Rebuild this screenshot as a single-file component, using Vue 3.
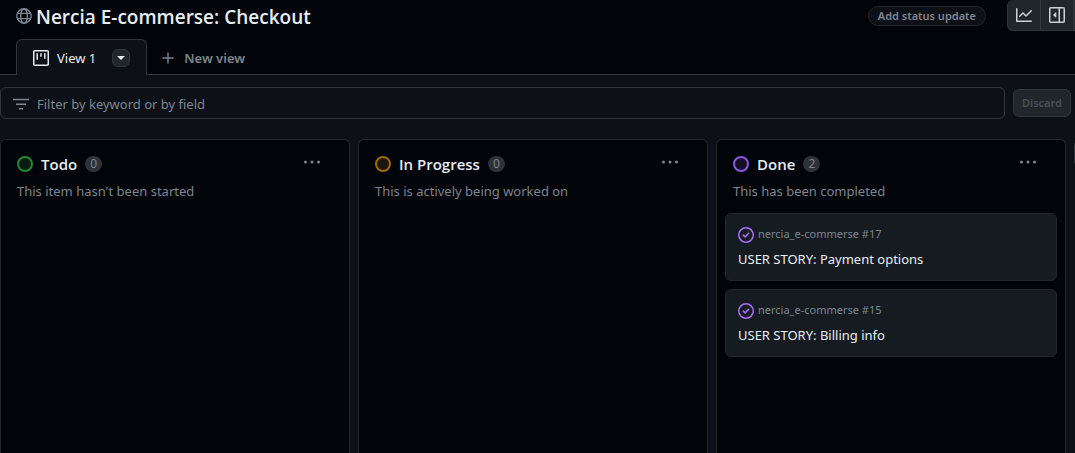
<script setup>
import { ref } from 'vue'

const filter = ref('')

const columns = [
  { name: 'Todo', tone: 'green', description: "This item hasn't been started", cards: [] },
  { name: 'In Progress', tone: 'amber', description: 'This is actively being worked on', cards: [] },
  {
    name: 'Done',
    tone: 'purple',
    description: 'This has been completed',
    cards: [
      { number: 17, title: 'USER STORY: Payment options' },
      { number: 15, title: 'USER STORY: Billing info' },
    ],
  },
]
</script>

<template>
  <div class="page">
    <header class="top">
      <div class="title-row">
        <svg class="icon muted" viewBox="0 0 16 16" aria-hidden="true">
          <g fill="none" stroke="currentColor" stroke-width="1.4">
            <circle cx="8" cy="8" r="7.2" />
            <ellipse cx="8" cy="8" rx="3.3" ry="7.2" />
            <path d="M1.4 5.4h13.2M1.4 10.6h13.2" />
          </g>
        </svg>
        <h1>Nercia E-commerse: Checkout</h1>
        <button class="status" type="button">Add status update</button>
        <div class="tools">
          <button type="button" aria-label="Insights">
            <svg class="icon" viewBox="0 0 16 16" aria-hidden="true">
              <path fill="currentColor" d="M1.5 1.75V13.5h13.75a.75.75 0 0 1 0 1.5H.75a.75.75 0 0 1-.75-.75V1.75a.75.75 0 0 1 1.5 0Zm14.28 2.53-5.25 5.25a.75.75 0 0 1-1.06 0L7 7.06 4.28 9.78a.751.751 0 0 1-1.06-1.06l3.25-3.25a.75.75 0 0 1 1.06 0L10 7.94l4.72-4.72a.751.751 0 0 1 1.06 1.06Z" />
            </svg>
          </button>
          <button type="button" aria-label="Project details">
            <svg class="icon" viewBox="0 0 16 16" aria-hidden="true">
              <g fill="none" stroke="currentColor" stroke-width="1.5">
                <rect x=".75" y=".75" width="14.5" height="14.5" rx="1" />
                <path d="M10.25 1v14" />
              </g>
              <path fill="currentColor" d="m4.2 8.2 2.4 2.4c.3.3.7.1.7-.3V5.7c0-.4-.4-.6-.7-.3L4.2 7.8a.28.28 0 0 0 0 .4Z" />
            </svg>
          </button>
          <button type="button" aria-label="More options"></button>
        </div>
      </div>
      <nav class="tabs">
        <div class="tab">
          <svg class="icon" viewBox="0 0 16 16" aria-hidden="true">
            <rect x=".75" y=".75" width="14.5" height="14.5" rx="1" fill="none" stroke="currentColor" stroke-width="1.5" />
            <path d="M4.2 3.2v6.6M8 3.2v3.6M11.8 3.2v5.6" stroke="currentColor" stroke-width="1.5" />
          </svg>
          <a href="#view-1">View 1</a>
          <button class="caret" type="button" aria-label="View options">
            <svg viewBox="0 0 8 4" aria-hidden="true"><path fill="currentColor" d="M0 0h8L4 4z" /></svg>
          </button>
        </div>
        <button class="new-view" type="button">
          <svg viewBox="0 0 12 12" aria-hidden="true">
            <path d="M6 .5v11M.5 6h11" stroke="currentColor" stroke-width="1.4" />
          </svg>
          New view
        </button>
      </nav>
    </header>

    <div class="filter-row">
      <label class="filter">
        <svg class="icon" viewBox="0 0 16 16" aria-hidden="true">
          <path d="M0 3.5h16M3 8.2h10M6 12.7h4" stroke="currentColor" stroke-width="1.4" />
        </svg>
        <input v-model="filter" type="text" placeholder="Filter by keyword or by field" aria-label="Filter by keyword or by field" />
      </label>
      <button class="discard" type="button" disabled>Discard</button>
    </div>

    <main class="board">
      <section v-for="column in columns" :key="column.name" class="column" :class="column.tone">
        <div class="column-head">
          <svg class="icon ring" viewBox="0 0 16 16" aria-hidden="true">
            <circle cx="8" cy="8" r="7" />
          </svg>
          <h2>{{ column.name }}</h2>
          <span class="count">{{ column.cards.length }}</span>
          <button class="more" type="button" :aria-label="`Actions for ${column.name}`">
            <svg viewBox="0 0 16 4" aria-hidden="true">
              <g fill="currentColor">
                <circle cx="1.5" cy="2" r="1.5" />
                <circle cx="8" cy="2" r="1.5" />
                <circle cx="14.5" cy="2" r="1.5" />
              </g>
            </svg>
          </button>
        </div>
        <p class="description">{{ column.description }}</p>
        <div class="cards">
          <article v-for="card in column.cards" :key="card.number" class="card">
            <div class="reference">
              <svg class="icon check" viewBox="0 0 16 16" aria-hidden="true">
                <g fill="none" stroke="currentColor" stroke-width="1.5">
                  <circle cx="8" cy="8" r="7.25" />
                  <path d="m5.3 8.1 1.8 1.8 3.6-3.6" stroke-linecap="round" stroke-linejoin="round" />
                </g>
              </svg>
              <span>nercia_e-commerse #{{ card.number }}</span>
            </div>
            <a href="#issue">{{ card.title }}</a>
          </article>
        </div>
      </section>
      <button class="add-column" type="button" aria-label="Add column"></button>
    </main>
  </div>
</template>

<style>
body {
  margin: 0;
  background: #0d1117;
}
</style>

<style scoped>
.page {
  box-sizing: border-box;
  display: flex;
  flex-direction: column;
  height: 100vh;
  overflow: hidden;
  background: #0d1117;
  color: #e6edf3;
  font: 13px/20px "Segoe UI", "Noto Sans", sans-serif;
}
button,
input {
  box-sizing: border-box;
  padding: 0;
  border: 0;
  background: none;
  color: inherit;
  font: inherit;
}
a {
  color: inherit;
  text-decoration: none;
}
svg {
  display: block;
  flex: none;
}
.icon {
  width: 16px;
  height: 16px;
}
.muted {
  color: #7d8590;
}
.top {
  background: #010409;
  flex: none;
}
.title-row {
  display: flex;
  align-items: center;
  height: 32px;
  padding-left: 16px;
}
h1 {
  flex: 1;
  margin: 0;
  padding: 2px 0 0 4px;
  font-family: "Segoe UI", "Open Sans", sans-serif;
  font-size: 19px;
  font-weight: 600;
  line-height: 30px;
  white-space: nowrap;
}
.status {
  height: 20px;
  padding: 0 9px;
  border: 1px solid #21262d;
  border-radius: 10px;
  background: #0d1117;
  color: #7d8590;
  font-size: 11px;
  font-weight: 600;
  line-height: 16px;
}
.tools {
  display: flex;
  align-self: flex-start;
  width: 68px;
  height: 31px;
  margin-left: 21px;
  overflow: hidden;
  box-sizing: border-box;
  border: 1px solid #30363d;
  border-width: 0 0 1px 1px;
  border-radius: 6px 0 0 6px;
  background: #21262d;
  color: #c9d1d9;
}
.tools button {
  display: flex;
  flex: none;
  align-items: center;
  justify-content: center;
  width: 33px;
  border-right: 1px solid #30363d;
}
.tabs {
  display: flex;
  height: 43px;
  padding: 7px 16px 0;
  box-sizing: border-box;
  box-shadow: inset 0 -1px #30363d;
}
.tab {
  display: flex;
  align-items: center;
  box-sizing: border-box;
  padding: 0 16px;
  border: 1px solid #30363d;
  border-bottom: 0;
  border-radius: 6px 6px 0 0;
  background: #0d1117;
}
.tab a {
  padding: 0 16px 0 8px;
}
.caret {
  display: flex;
  align-items: center;
  justify-content: center;
  width: 18px;
  height: 18px;
  border: 1px solid #30363d;
  border-radius: 6px;
  background: #21262d;
}
.caret svg {
  width: 8px;
  height: 4px;
}
.new-view {
  display: flex;
  align-items: center;
  gap: 10px;
  padding: 2px 0 0 15px;
  color: #7d8590;
  font-weight: 600;
}
.new-view svg {
  width: 12px;
  height: 12px;
}
.filter-row {
  display: flex;
  flex: none;
  align-items: center;
  gap: 8px;
  padding: 12px 4px 20px 0;
}
.filter {
  display: flex;
  flex: 1;
  align-items: center;
  gap: 8px;
  box-sizing: border-box;
  height: 32px;
  padding: 2px 12px 0;
  border: 1px solid #30363d;
  border-radius: 6px;
  color: #7d8590;
}
.filter input {
  flex: 1;
  min-width: 0;
  outline: 0;
}
.filter input::placeholder {
  color: #7d8590;
  opacity: 1;
}
.discard {
  height: 28px;
  padding: 0 8px;
  border: 1px solid #30363d;
  border-radius: 6px;
  background: #21262d;
  color: #484f58;
  font-size: 11px;
  font-weight: 600;
}
.board {
  display: flex;
  flex: 1;
  gap: 8px;
  min-height: 0;
  overflow: hidden;
}
.column {
  flex: none;
  box-sizing: border-box;
  width: 350px;
  border: 1px solid #21262d;
  border-bottom: 0;
  border-radius: 6px 6px 0 0;
  background: #010409;
}
.column-head {
  display: flex;
  align-items: center;
  gap: 8px;
  padding: 12px 28px 0 16px;
  height: 24px;
}
.ring {
  fill: none;
  stroke-width: 2;
}
.green .ring {
  stroke: #238636;
  fill: #0a1c12;
}
.amber .ring {
  stroke: #9e6a03;
  fill: #1c160c;
}
.purple .ring {
  stroke: #8957e5;
  fill: #160f24;
}
h2 {
  margin: 0;
  font-family: "Segoe UI", "Open Sans", sans-serif;
  font-size: 15px;
  font-weight: 600;
  line-height: 24px;
}
.count {
  box-sizing: border-box;
  min-width: 17px;
  height: 16px;
  border-radius: 8px;
  background: #2d3139;
  color: #7d8590;
  font-size: 12px;
  line-height: 16px;
  text-align: center;
}
.more {
  margin: 0 0 5px auto;
  color: #7d8590;
}
.more svg {
  width: 18px;
  height: 4px;
}
.description {
  margin: 0;
  padding: 5px 16px 0;
  color: #7d8590;
}
.cards {
  display: flex;
  flex-direction: column;
  gap: 8px;
  padding: 12px 8px;
}
.card {
  box-sizing: border-box;
  height: 68px;
  padding: 10px 12px;
  border: 1px solid #21262d;
  border-radius: 6px;
  background: #161b22;
}
.reference {
  display: flex;
  gap: 4px;
  padding-bottom: 5px;
  color: #7d8590;
  font-size: 11px;
}
.check {
  margin-top: 3px;
  color: #a371f7;
}
.add-column {
  flex: none;
  width: 32px;
  height: 28px;
  border: 1px solid #30363d;
  border-radius: 6px;
  background: #21262d;
}
</style>
